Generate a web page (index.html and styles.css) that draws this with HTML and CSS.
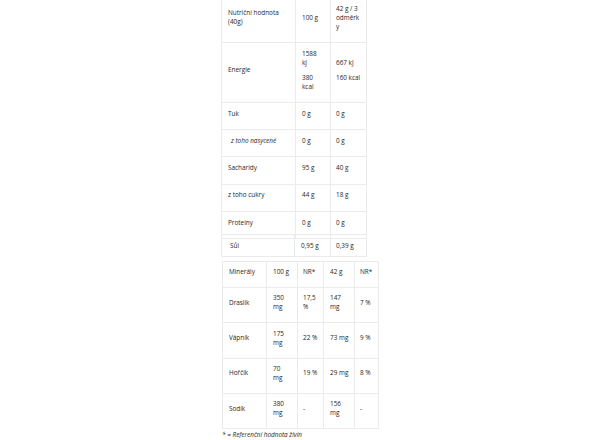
FILE: index.html
```html
<!DOCTYPE html>
<html lang="cs">
<head>
<meta charset="utf-8">
<title>Nutriční hodnota</title>
<link rel="stylesheet" href="styles.css">
</head>
<body>
<div class="wrap">
  <table class="nutri">
    <colgroup><col class="c1"><col class="c2"><col class="c3"></colgroup>
    <tr>
      <td><p>Nutriční hodnota<br>(40g)</p></td>
      <td><p>100 g</p></td>
      <td class="wrapcell"><p>42 g / 3 odměrky</p></td>
    </tr>
    <tr>
      <td><p>Energie</p></td>
      <td><p>1588<br>kJ</p><p>380<br>kcal</p></td>
      <td><p>667 kJ</p><p>160 kcal</p></td>
    </tr>
    <tr><td><p>Tuk</p></td><td><p>0 g</p></td><td><p>0 g</p></td></tr>
    <tr><td><p class="sub"><em>z toho nasycené</em></p></td><td><p>0 g</p></td><td><p>0 g</p></td></tr>
    <tr><td><p>Sacharidy</p></td><td><p>95 g</p></td><td><p>40 g</p></td></tr>
    <tr><td><p>z toho cukry</p></td><td><p>44 g</p></td><td><p>18 g</p></td></tr>
    <tr><td><p>Proteiny</p></td><td><p>0 g</p></td><td><p>0 g</p></td></tr>
  </table>
  <table class="salt">
    <colgroup><col class="s1"><col class="s2"><col class="s3"></colgroup>
    <tr><td>Sůl</td><td>0,95 g</td><td>0,39 g</td></tr>
  </table>
  <table class="minerals">
    <colgroup><col class="m1"><col class="m2"><col class="m3"><col class="m4"><col class="m5"></colgroup>
    <tr><td><p>Minerály</p></td><td><p>100 g</p></td><td><p>NR*</p></td><td><p>42 g</p></td><td><p>NR*</p></td></tr>
    <tr><td><p>Draslík</p></td><td><p>350<br>mg</p></td><td><p>17,5<br>%</p></td><td><p>147<br>mg</p></td><td><p>7 %</p></td></tr>
    <tr><td><p>Vápník</p></td><td><p>175<br>mg</p></td><td><p>22 %</p></td><td><p>73 mg</p></td><td><p>9 %</p></td></tr>
    <tr><td><p>Hořčík</p></td><td><p>70<br>mg</p></td><td><p>19 %</p></td><td><p>29 mg</p></td><td><p>8 %</p></td></tr>
    <tr><td><p>Sodík</p></td><td><p>380<br>mg</p></td><td><p>-</p></td><td><p>156<br>mg</p></td><td><p>-</p></td></tr>
  </table>
  <p class="note"><em>* = Referenční hodnota živin</em></p>
</div>
</body>
</html>
```
FILE: styles.css
```css
html, body {
  margin: 0;
  padding: 0;
  background: #ffffff;
}
body {
  font-family: "Open Sans", sans-serif;
  font-size: 6.4px;
  line-height: 9px;
  color: #262626;
}
.wrap {
  margin-top: -3px;
  padding-left: 221px;
}
table {
  border-collapse: collapse;
  table-layout: fixed;
}
td {
  border: 1px solid #ebebeb;
  padding: 5.8px 6px;
  vertical-align: middle;
  white-space: nowrap;
}
td p {
  margin: 0 0 5.6px;
}
.nutri {
  width: 145px;
}
.nutri .c1 { width: 74px; }
.nutri .c2 { width: 35px; }
.nutri .c3 { width: 36px; }
.nutri td:nth-child(3) { padding-left: 5px; padding-right: 5.5px; }
.nutri .wrapcell {
  white-space: normal;
  overflow-wrap: anywhere;
}
.sub {
  padding-left: 3px;
}
.salt {
  width: 145px;
  margin-top: -5px;
}
.salt .s1 { width: 73px; }
.salt .s2 { width: 36px; }
.salt .s3 { width: 36px; }
.salt td:first-child { padding-left: 8px; }
.salt td:nth-child(3) { padding-left: 5px; }
.minerals {
  width: 156px;
  margin-top: 4.5px;
  margin-left: 1px;
}
.minerals td {
  padding-top: 5.3px;
  padding-bottom: 5.3px;
}
.minerals .m1 { width: 44px; }
.minerals .m2 { width: 31px; }
.minerals .m3 { width: 26px; }
.minerals .m4 { width: 31px; }
.minerals .m5 { width: 24px; }
.minerals td:nth-child(3),
.minerals td:nth-child(5) { padding-left: 5px; padding-right: 5px; }
.note {
  margin: 2px 0 0 1px;
  line-height: 7px;
}
```
